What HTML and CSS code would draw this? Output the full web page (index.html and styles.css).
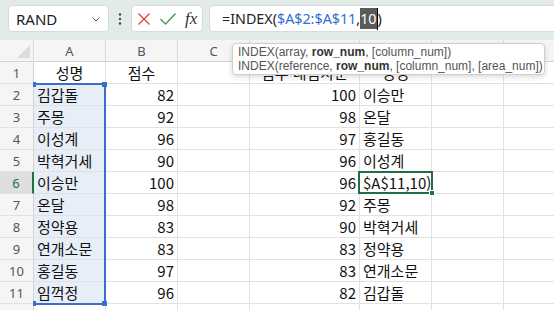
FILE: index.html
```html
<!DOCTYPE html>
<html lang="ko">
<head>
    <meta charset="UTF-8">
    <title>INDEX</title>
    <link rel="stylesheet" href="styles.css">
</head>
<body>
    <div class="app">
        <div class="fbar">
            <div class="namebox">
                <span>RAND</span>
                <svg class="chev" width="8" height="5" viewBox="0 0 8 5"><path d="M0.5 0.5 L4 4 L7.5 0.5" fill="none" stroke="#555" stroke-width="1"/></svg>
            </div>
            <div class="dots">
                <svg width="4" height="12" viewBox="0 0 4 12"><circle cx="2" cy="1.5" r="1.2" fill="#444"/><circle cx="2" cy="6" r="1.2" fill="#444"/><circle cx="2" cy="10.5" r="1.2" fill="#444"/></svg>
            </div>
            <div class="fbtns">
                <svg width="12" height="12" viewBox="0 0 12 12"><path d="M0.5 0.5 L11.5 11.5 M11.5 0.5 L0.5 11.5" stroke="#e04040" stroke-width="1.3" fill="none"/></svg>
                <svg width="16" height="12" viewBox="0 0 16 12"><path d="M0.5 6 L5.5 11 L15.5 0.5" stroke="#3b9a57" stroke-width="1.3" fill="none"/></svg>
                <span class="fx">fx</span>
            </div>
            <div class="finput">
                <span>=INDEX(</span><span class="ref">$A$2:$A$11</span><span>,</span><span class="hl">10</span><span class="caret"></span><span>)</span>
            </div>
        </div>

        <div class="sheet">
            <div class="corner"><span class="tri"></span></div>
            <div class="ch">A</div><div class="ch">B</div><div class="ch">C</div><div class="ch">D</div><div class="ch">E</div><div class="ch">F</div><div class="ch">G</div>

            <div class="rh">1</div>
            <div class="c ctr">성명</div><div class="c ctr">점수</div><div class="c"></div><div class="c ctr">점수 내림차순</div><div class="c ctr">성명</div><div class="c"></div><div class="c"></div>

            <div class="rh">2</div>
            <div class="c sel">김갑돌</div><div class="c num">82</div><div class="c"></div><div class="c num">100</div><div class="c">이승만</div><div class="c"></div><div class="c"></div>

            <div class="rh">3</div>
            <div class="c sel">주몽</div><div class="c num">92</div><div class="c"></div><div class="c num">98</div><div class="c">온달</div><div class="c"></div><div class="c"></div>

            <div class="rh">4</div>
            <div class="c sel">이성계</div><div class="c num">96</div><div class="c"></div><div class="c num">97</div><div class="c">홍길동</div><div class="c"></div><div class="c"></div>

            <div class="rh">5</div>
            <div class="c sel">박혁거세</div><div class="c num">90</div><div class="c"></div><div class="c num">96</div><div class="c">이성계</div><div class="c"></div><div class="c"></div>

            <div class="rh active">6</div>
            <div class="c sel">이승만</div><div class="c num">100</div><div class="c"></div><div class="c num">96</div><div class="c">$A$11,10)</div><div class="c"></div><div class="c"></div>

            <div class="rh">7</div>
            <div class="c sel">온달</div><div class="c num">98</div><div class="c"></div><div class="c num">92</div><div class="c">주몽</div><div class="c"></div><div class="c"></div>

            <div class="rh">8</div>
            <div class="c sel">정약용</div><div class="c num">83</div><div class="c"></div><div class="c num">90</div><div class="c">박혁거세</div><div class="c"></div><div class="c"></div>

            <div class="rh">9</div>
            <div class="c sel">연개소문</div><div class="c num">83</div><div class="c"></div><div class="c num">83</div><div class="c">정약용</div><div class="c"></div><div class="c"></div>

            <div class="rh">10</div>
            <div class="c sel">홍길동</div><div class="c num">97</div><div class="c"></div><div class="c num">83</div><div class="c">연개소문</div><div class="c"></div><div class="c"></div>

            <div class="rh">11</div>
            <div class="c sel">임꺽정</div><div class="c num">96</div><div class="c"></div><div class="c num">82</div><div class="c">김갑돌</div><div class="c"></div><div class="c"></div>

            <div class="rh"></div>
            <div class="c"></div><div class="c"></div><div class="c"></div><div class="c"></div><div class="c"></div><div class="c"></div><div class="c"></div>
        </div>

        <!-- range highlight for $A$2:$A$11 -->
        <div class="range">
            <span class="h tl"></span><span class="h tr"></span><span class="h bl"></span><span class="h br"></span>
        </div>
        <!-- cell being edited -->
        <div class="active-cell"><span class="fill"></span></div>

        <div class="tip">
            <div>INDEX(array, <b>row_num</b>, [column_num])</div>
            <div>INDEX(reference, <b>row_num</b>, [column_num], [area_num])</div>
        </div>
    </div>
</body>
</html>
```

FILE: styles.css
```css
* {
    margin: 0;
    padding: 0;
    box-sizing: border-box;
}

body {
    width: 554px;
    height: 310px;
    overflow: hidden;
    background-color: #fff;
    font-family: "Noto Sans", Arial, sans-serif;
}

.app {
    position: relative;
    width: 554px;
    height: 310px;
    overflow: hidden;
}

/* formula bar */
.fbar {
    height: 40px;
    background-color: #e3ebe9;
    display: flex;
    align-items: flex-start;
    padding: 5px 0 0 8px;
}

.namebox {
    width: 101px;
    height: 27px;
    background-color: #fff;
    border: 1px solid #d6dcdb;
    border-radius: 4px;
    display: flex;
    align-items: center;
    justify-content: space-between;
    padding: 0 8px 0 7px;
    font-size: 15px;
    color: #222;
}

.chev {
    margin-top: 1px;
}

.dots {
    width: 22px;
    height: 27px;
    display: flex;
    align-items: center;
    justify-content: center;
}

.fbtns {
    width: 72px;
    height: 27px;
    background-color: #fff;
    border: 1px solid #d6dcdb;
    border-radius: 4px;
    display: flex;
    align-items: center;
    padding-left: 6px;
    gap: 10px;
}

.fx {
    font-family: "Liberation Serif", serif;
    font-style: italic;
    font-size: 17px;
    color: #333;
    margin-left: -1px;
}

.finput {
    flex: 1;
    margin-left: 6px;
    margin-right: -10px;
    height: 27px;
    background-color: #fff;
    border: 1px solid #d6dcdb;
    border-radius: 4px;
    display: flex;
    align-items: center;
    padding-left: 12px;
    font-size: 14.3px;
    color: #222;
    white-space: pre;
}

.ref {
    color: #2d6fd6;
}

.hl {
    background-color: #5a5a5a;
    color: #fff;
    line-height: 21px;
    display: inline-block;
}

.caret {
    display: inline-block;
    width: 1px;
    height: 22px;
    background-color: #000;
}

/* grid */
.sheet {
    display: grid;
    grid-template-columns: 34px 72px 72px 72px 110px 72px 72px 60px;
    grid-auto-rows: 22px;
    font-family: "Noto Sans CJK KR", "Noto Sans", sans-serif;
}

.corner,
.ch {
    background-color: #f5f5f5;
    border-right: 1px solid #d9d9d9;
    border-bottom: 1px solid #d4d4d4;
}

.corner {
    position: relative;
}

.tri {
    position: absolute;
    right: 3px;
    bottom: 3px;
    width: 0;
    height: 0;
    border-left: 13px solid transparent;
    border-bottom: 13px solid #dcdcdc;
}

.ch {
    display: flex;
    align-items: center;
    justify-content: center;
    font-family: "Noto Sans", sans-serif;
    font-size: 13px;
    color: #555;
}

.rh {
    background-color: #f5f5f5;
    border-right: 1px solid #d4d4d4;
    border-bottom: 1px solid #e1e1e1;
    display: flex;
    align-items: center;
    justify-content: center;
    font-family: "Noto Sans", sans-serif;
    font-size: 13px;
    color: #555;
}

.rh.active {
    background-color: #dedede;
    color: #1e7145;
    border-right: 2px solid #1e7145;
}

.c {
    border-right: 1px solid #e1e1e1;
    border-bottom: 1px solid #e1e1e1;
    font-size: 15px;
    line-height: 21px;
    color: #111;
    padding: 0 3px;
    white-space: nowrap;
    overflow: hidden;
}

.ctr {
    text-align: center;
}

.num {
    text-align: right;
}

.sel {
    background-color: #e8eef8;
}

/* overlays */
.range {
    position: absolute;
    left: 34px;
    top: 83px;
    width: 72px;
    height: 222px;
    border: 2px solid #3a6ecb;
    border-left: none;
}

.h {
    position: absolute;
    width: 5px;
    height: 5px;
    background-color: #3a6ecb;
}

.tl { left: -1px; top: -3px; width: 3px; }
.tr { right: -3px; top: -3px; }
.bl { left: -1px; bottom: -3px; width: 3px; }
.br { right: -3px; bottom: -3px; }

.active-cell {
    position: absolute;
    left: 358px;
    top: 171px;
    width: 75px;
    height: 23px;
    border: 2px solid #1e7145;
}

.fill {
    position: absolute;
    right: -4px;
    bottom: -4px;
    width: 6px;
    height: 6px;
    background-color: #1e7145;
    border: 1px solid #fff;
}

.tip {
    position: absolute;
    left: 232px;
    top: 43px;
    width: 313px;
    height: 32px;
    background-color: #fff;
    border: 1px solid #cfcfcf;
    border-radius: 4px;
    box-shadow: 0 2px 5px rgba(0, 0, 0, 0.15);
    padding: 1px 0 0 5px;
    font-family: "Liberation Sans", Arial, sans-serif;
    font-size: 12px;
    line-height: 14px;
    color: #555;
    white-space: nowrap;
    overflow: hidden;
}

.tip b {
    color: #333;
}
```
